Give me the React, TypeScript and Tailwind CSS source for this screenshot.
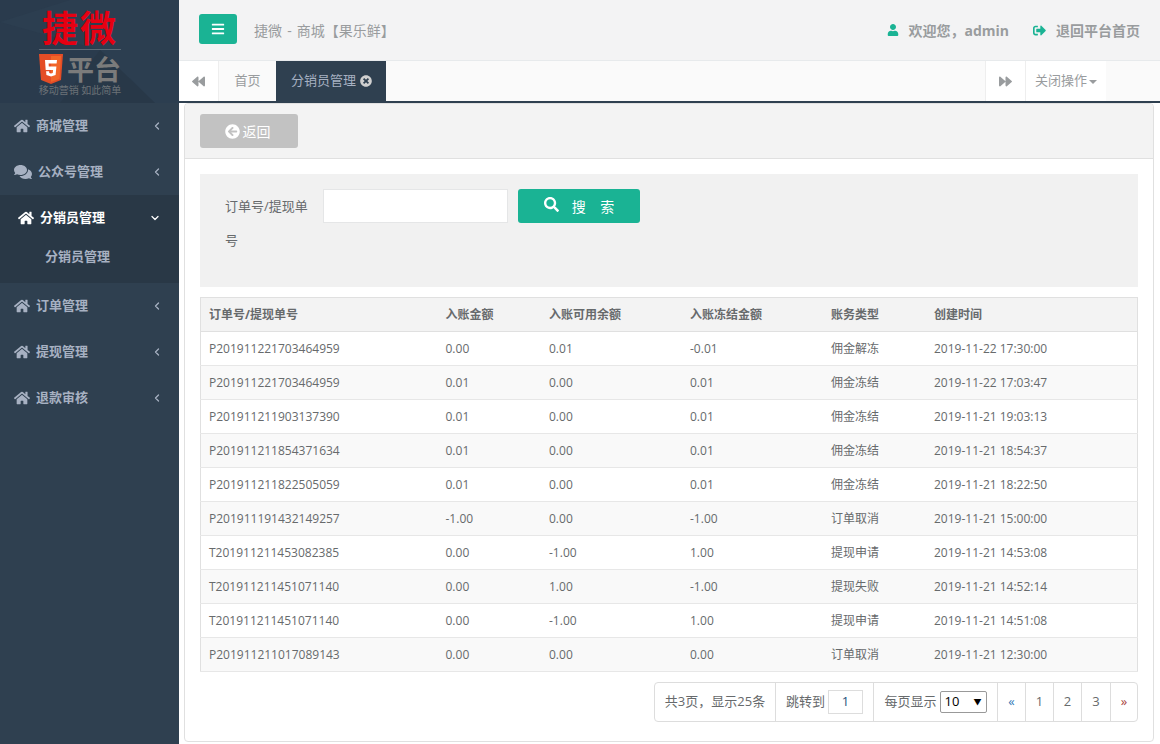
import { FaHome, FaComments, FaUser, FaSignOutAlt, FaBars, FaBackward, FaForward, FaTimesCircle, FaArrowCircleLeft, FaSearch } from "react-icons/fa";
import { ChevronLeft, ChevronDown } from "lucide-react";

const rows = [
  ["P201911221703464959", "0.00", "0.01", "-0.01", "佣金解冻", "2019-11-22 17:30:00"],
  ["P201911221703464959", "0.01", "0.00", "0.01", "佣金冻结", "2019-11-22 17:03:47"],
  ["P201911211903137390", "0.01", "0.00", "0.01", "佣金冻结", "2019-11-21 19:03:13"],
  ["P201911211854371634", "0.01", "0.00", "0.01", "佣金冻结", "2019-11-21 18:54:37"],
  ["P201911211822505059", "0.01", "0.00", "0.01", "佣金冻结", "2019-11-21 18:22:50"],
  ["P201911191432149257", "-1.00", "0.00", "-1.00", "订单取消", "2019-11-21 15:00:00"],
  ["T201911211453082385", "0.00", "-1.00", "1.00", "提现申请", "2019-11-21 14:53:08"],
  ["T201911211451071140", "0.00", "1.00", "-1.00", "提现失败", "2019-11-21 14:52:14"],
  ["T201911211451071140", "0.00", "-1.00", "1.00", "提现申请", "2019-11-21 14:51:08"],
  ["P201911211017089143", "0.00", "0.00", "0.00", "订单取消", "2019-11-21 12:30:00"],
];

const heads = ["订单号/提现单号", "入账金额", "入账可用余额", "入账冻结金额", "账务类型", "创建时间"];
const widths = ["w-[237px]", "w-[103.5px]", "w-[141px]", "w-[141px]", "w-[103px]", "w-auto"];

function NavItem({ label, icon, gap = "gap-[6px]" }: { label: string; icon: React.ReactNode; gap?: string }) {
  return (
    <div className="flex h-[46px] items-center pl-[14px] pr-[16px] text-[#a7b1c2]">
      <div className={`flex items-center font-bold text-[13px] ${gap}`}>
        {icon}
        <span>{label}</span>
      </div>
      <ChevronLeft size={12} strokeWidth={2.5} className="ml-auto" />
    </div>
  );
}

function Sidebar() {
  return (
    <aside className="w-[179px] shrink-0 bg-[#2f4050] flex flex-col">
      <div className="relative h-[103px] bg-[#2a3b4d] overflow-hidden pl-[39px]">
        <svg className="absolute inset-0" width="179" height="103" viewBox="0 0 179 103">
          <polygon points="0,22 70,0 179,0 179,103 155,103 100,50" fill="#2c3e50" />
          <polygon points="100,50 155,103 60,103" fill="#283848" />
        </svg>
        <div className="relative w-[82px] flex flex-col items-center">
          <div className="h-[49px] w-[82px] pt-[7px] text-center text-[36px] leading-[38px] tracking-[2px] font-bold text-[#e60012] whitespace-nowrap font-['Noto_Sans_CJK_SC',sans-serif]">
            捷微
          </div>
          <div className="h-px w-[82px] bg-[#5d6a76]" />
          <div className="flex items-start w-[82px] mt-[4px] h-[30px]">
            <svg width="24" height="30" viewBox="0 0 24 30" className="shrink-0">
              <polygon points="0,0 24,0 22,26 12,30 2,26" fill="#e44d26" />
              <polygon points="12,2 22,2 20.5,25 12,28" fill="#f16529" />
              <path d="M6 6h12l-.4 3.4H9.6l.2 3.2h7.6l-.8 8.4-4.6 1.6-4.6-1.6-.3-3.8h3l.2 1.8 1.7.6 1.8-.6.3-3H6.7z" fill="#fff" />
            </svg>
            <span className="ml-[4px] text-[27px] leading-[30px] font-bold text-[#7b7b7b] font-['Noto_Sans_CJK_SC',sans-serif] whitespace-nowrap">平台</span>
          </div>
          <div className="text-[10px] leading-[13px] text-[#6c7277] whitespace-nowrap">移动营销 如此简单</div>
        </div>
      </div>
      <nav>
        <NavItem label="商城管理" icon={<FaHome className="text-[16px]" />} />
        <NavItem label="公众号管理" icon={<FaComments className="text-[18px]" />} />
        <div className="bg-[#293846] h-[88px]">
          <div className="flex h-[46px] items-center pl-[18px] pr-[18px] text-white">
            <div className="flex items-center gap-[6px] font-bold text-[13px]">
              <FaHome className="text-[16px]" />
              <span>分销员管理</span>
            </div>
            <ChevronDown size={12} strokeWidth={2.5} className="ml-auto" />
          </div>
          <div className="pl-[45px] pt-[4px] text-[13px] font-bold leading-[22px] text-[#a7b1c2]">分销员管理</div>
        </div>
        <NavItem label="订单管理" icon={<FaHome className="text-[16px]" />} />
        <NavItem label="提现管理" icon={<FaHome className="text-[16px]" />} />
        <NavItem label="退款审核" icon={<FaHome className="text-[16px]" />} />
      </nav>
    </aside>
  );
}

function Topbar() {
  return (
    <header className="h-[61px] bg-[#f3f3f4] border-b border-[#e7eaec] flex items-center pl-[20px] pr-[20px]">
      <button className="w-[38px] h-[30px] -mt-[2px] rounded-[3px] bg-[#1ab394] text-white flex items-center justify-center">
        <FaBars className="text-[14px]" />
      </button>
      <span className="ml-[17px] text-[14px] text-[#999c9e]">
        捷微 <span className="mx-[1.5px]">-</span> 商城【果乐鲜】
      </span>
      <div className="ml-auto flex items-center text-[14px] font-bold text-[#999c9e]">
        <FaUser className="text-[#1ab394] text-[12px] mr-[9px]" />
        <span>欢迎您，admin</span>
        <FaSignOutAlt className="text-[#1ab394] text-[13px] ml-[24px] mr-[10px]" />
        <span>退回平台首页</span>
      </div>
    </header>
  );
}

function Tabs() {
  return (
    <div className="h-[42px] bg-[#fafafa] border-b-2 border-[#2f4050] flex text-[13px] text-[#999c9e]">
      <div className="w-[40px] bg-white border-r border-[#eeeeee] flex items-center justify-center">
        <FaBackward className="text-[13px]" />
      </div>
      <div className="w-[57px] flex items-center justify-center">首页</div>
      <div className="w-[110px] bg-[#2f4050] flex items-center pl-[15px] gap-[4px] text-[#a7b1c2]">
        <span>分销员管理</span>
        <FaTimesCircle className="text-[12px] text-[#d0d0d0]" />
      </div>
      <div className="ml-auto w-[41px] bg-white border-x border-[#eeeeee] flex items-center justify-center">
        <FaForward className="text-[13px]" />
      </div>
      <div className="w-[80px] bg-white flex items-center pl-[9px] mr-[54px]">
        关闭操作
        <span className="ml-[2px] mt-[2px] border-x-[4px] border-x-transparent border-t-[4px] border-t-[#999c9e]" />
      </div>
    </div>
  );
}

function SearchBox() {
  return (
    <div className="h-[113px] bg-[#f1f1f1] flex items-start pt-[15px] pl-[25px]">
      <label className="w-[98px] text-[13px] leading-[34px] text-[#676a6c] pr-[10px] break-all">
        订单号/提现单号
      </label>
      <input className="w-[185px] h-[34px] bg-white border border-[#e5e6e7] outline-none" />
      <button className="ml-[10px] w-[122px] h-[34px] rounded-[3px] bg-[#1ab394] text-white text-[14px] flex items-center justify-center">
        <FaSearch className="text-[15px] mr-[13px] -mt-[3px]" />
        <span>搜&nbsp;&nbsp;&nbsp;&nbsp;索</span>
      </button>
    </div>
  );
}

function DataTable() {
  return (
    <table className="mt-[10px] w-[938px] table-fixed border-collapse text-[12px] text-[#676a6c] border border-[#e0e0e0]">
      <thead>
        <tr className="h-[34px] bg-[#f3f3f3] border-b border-[#e0e0e0]">
          {heads.map((h, i) => (
            <th key={h} className={`${widths[i]} px-[8px] text-left font-bold`}>{h}</th>
          ))}
        </tr>
      </thead>
      <tbody>
        {rows.map((r, i) => (
          <tr key={i} className={`h-[34px] border-b border-[#e7e7e7] ${i % 2 ? "bg-[#f9f9f9]" : "bg-white"}`}>
            {r.map((c, j) => (
              <td key={j} className="px-[8px]">{c}</td>
            ))}
          </tr>
        ))}
      </tbody>
    </table>
  );
}

function Pager() {
  return (
    <div className="mt-[10px] ml-auto w-[484px] h-[40px] flex rounded-[4px] border border-[#dddddd] text-[13px] text-[#676a6c]">
      <div className="w-[121px] flex items-center justify-center border-r border-[#dddddd] whitespace-nowrap">共3页，显示25条</div>
      <div className="w-[98px] flex items-center justify-center gap-[3px] border-r border-[#dddddd]">
        跳转到
        <span className="w-[35px] h-[24px] border border-[#dddddd] flex items-center justify-center text-[#23527c]">1</span>
      </div>
      <div className="w-[124px] flex items-center justify-center gap-[3px] border-r border-[#dddddd]">
        每页显示
        <span className="w-[47px] h-[22px] border border-[#999999] rounded-[2px] bg-white flex items-center justify-between px-[4px] text-black text-[13px]">
          10<span className="text-[8px]">▼</span>
        </span>
      </div>
      <div className="w-[28px] flex items-center justify-center border-r border-[#dddddd] text-[#337ab7]">«</div>
      <div className="w-[28px] flex items-center justify-center border-r border-[#dddddd]">1</div>
      <div className="w-[28px] flex items-center justify-center border-r border-[#dddddd]">2</div>
      <div className="w-[29px] flex items-center justify-center border-r border-[#dddddd]">3</div>
      <div className="flex-1 flex items-center justify-center text-[#a94442]">»</div>
    </div>
  );
}

export default function App() {
  return (
    <div className="flex h-[744px] w-[1160px] overflow-hidden bg-white font-['Open_Sans','Noto_Sans_CJK_SC',sans-serif]">
      <Sidebar />
      <main className="flex-1 min-w-0 flex flex-col">
        <Topbar />
        <Tabs />
        <div className="flex-1 pl-[5px] pr-[6px] pb-[2px]">
          <div className="h-full rounded-[4px] border border-[#e0e0e0] bg-white">
            <div className="h-[55px] bg-[#f3f3f3] border-b border-[#e0e0e0] pl-[15px] pt-[10px] rounded-t-[4px]">
              <button className="w-[98px] h-[34px] rounded-[3px] bg-[#c2c2c2] text-white text-[14px] flex items-center justify-center gap-[3px] pr-[3px]">
                <FaArrowCircleLeft className="text-[15px]" />
                <span>返回</span>
              </button>
            </div>
            <div className="pt-[15px] pl-[15px] pr-[15px] flex flex-col">
              <SearchBox />
              <DataTable />
              <Pager />
            </div>
          </div>
        </div>
      </main>
    </div>
  );
}
